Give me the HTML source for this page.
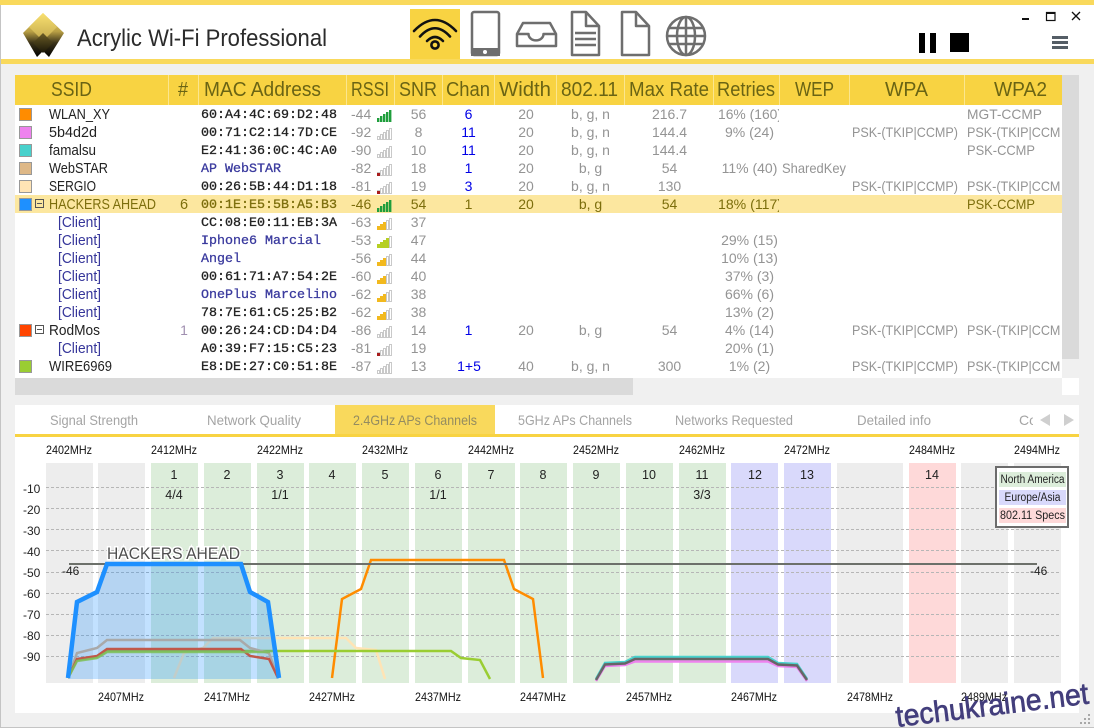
<!DOCTYPE html>
<html lang="en">
<head>
<meta charset="utf-8">
<title>Acrylic Wi-Fi Professional</title>
<style>
html,body{margin:0;padding:0;background:#f0f0f0;width:1094px;height:728px;overflow:hidden}
svg{display:block}
text{font-family:"Liberation Sans",Arial,sans-serif}
.h{font-size:20px;fill:#6a6414}
.s{font-size:14.5px;fill:#222}
.c{font-size:14.5px;fill:#35359a}
.m{font-family:"Liberation Mono","Courier New",monospace;font-size:13.33px;fill:#222;stroke:#222;stroke-width:.3}
.n{font-family:"Liberation Mono","Courier New",monospace;font-size:13.33px;fill:#3a3a9e;stroke:#3a3a9e;stroke-width:.3}
.g{font-size:14px;fill:#949494}
.b{font-size:14px;fill:#0000e6;text-anchor:middle}
.mid{text-anchor:middle}
.o{font-size:14px;fill:#7c6e0c}
.t{font-size:14px;fill:#a4a4a4}
.f{font-size:12px;fill:#111}
.l{font-size:12.5px;fill:#222;text-anchor:middle}
.y{font-size:12px;fill:#222}
.lg{font-size:11.5px;fill:#222;text-anchor:middle}
</style>
</head>
<body>
<svg xmlns="http://www.w3.org/2000/svg" width="1094" height="728" viewBox="0 0 1094 728">
<defs>
<linearGradient id="lg0" x1="0" y1="0" x2="0" y2="1"><stop offset="0" stop-color="#f7dc6c"/><stop offset=".42" stop-color="#b9a045"/><stop offset=".68" stop-color="#3a3218"/><stop offset="1" stop-color="#000"/></linearGradient>
<linearGradient id="lg1" x1="0" y1="0" x2="0" y2="1"><stop offset="0" stop-color="#f9e070"/><stop offset="1" stop-color="#c2a84c"/></linearGradient>
<linearGradient id="lg3" x1="0" y1="0" x2="0" y2="1"><stop offset="0" stop-color="#6b5c26"/><stop offset="1" stop-color="#1a1608"/></linearGradient>
<clipPath id="cr"><rect x="715" y="105" width="64" height="273"/></clipPath>
<clipPath id="cw"><rect x="965" y="105" width="96" height="273"/></clipPath>
<clipPath id="ct"><rect x="1000" y="405" width="33" height="29"/></clipPath>
<g id="h" fill="#fff" stroke="#c9c9c9" stroke-width="1">
<rect x=".5" y="8.5" width="2" height="3"/><rect x="3.5" y="6.5" width="2" height="5"/><rect x="6.5" y="4.5" width="2" height="7"/><rect x="9.5" y="2.5" width="2" height="9"/><rect x="12.5" y=".5" width="2" height="11"/>
</g>
<g id="s1"><use href="#h"/><rect x="0" y="9" width="3" height="3" fill="#a81c1c"/></g>
<g id="s3"><use href="#h"/><g fill="#f2b91e"><rect x="0" y="8" width="3" height="4"/><rect x="3" y="6" width="3" height="6"/><rect x="6" y="4" width="3" height="8"/></g></g>
<g id="s4"><use href="#h"/><g fill="#b6cf22"><rect x="0" y="8" width="3" height="4"/><rect x="3" y="6" width="3" height="6"/><rect x="6" y="4" width="3" height="8"/><rect x="9" y="2" width="3" height="10"/></g></g>
<g id="s5" fill="#1f9e3c"><rect x="0" y="8" width="2.4" height="4"/><rect x="3" y="6" width="2.4" height="6"/><rect x="6" y="4" width="2.4" height="8"/><rect x="9" y="2" width="2.4" height="10"/><rect x="12" y="0" width="2.4" height="12"/></g>
</defs>

<!-- window -->
<rect width="1094" height="728" fill="#f0f0f0"/>
<rect x="0" y="0" width="1" height="728" fill="#c4c4c4"/>
<rect x="0" y="727" width="1094" height="1" fill="#c4c4c4"/>
<rect x="0" y="0" width="1094" height="5" fill="#f9d95c"/>
<rect x="1" y="5" width="1093" height="54" fill="#fff"/>
<rect x="1" y="59" width="1093" height="5" fill="#f9d95c"/>

<!-- logo -->
<path d="M43 13L64 33L49 57L43 51L37 57L23 33Z" fill="url(#lg0)"/>
<polygon points="43,13 57,27 43,41 29,27" fill="url(#lg1)"/>
<polygon points="43,33 53,43 43,53 33,43" fill="url(#lg3)"/>
<text x="77" y="46" font-size="24" fill="#2b2b2b" textLength="250" lengthAdjust="spacingAndGlyphs">Acrylic Wi-Fi Professional</text>

<!-- toolbar -->
<rect x="410" y="9" width="50" height="50" fill="#f8d342"/>
<g fill="none" stroke="#111" stroke-width="2.6" stroke-linecap="round">
<path d="M414 31Q435 9 456 31"/><path d="M420 36.5Q435 20 450 36.5"/><path d="M427 41Q435 33 443 41"/><circle cx="435" cy="45" r="3.6"/>
</g>
<g fill="none" stroke="#6e6e6e" stroke-width="2.5" stroke-linejoin="round">
<rect x="472" y="12" width="27" height="43" rx="2"/>
<path d="M517 34L523 23H550L556 34V46H517Z"/>
<path d="M517 34H528.5A7 6 0 0 0 543.5 34H556"/>
<path d="M572 12H586L599 26V55H572Z"/><path d="M586 12V26H599"/>
<path d="M575 33H596M575 39H596M575 45H596"/>
<path d="M622 12H636L649 26V55H622Z"/><path d="M636 12V26H649"/>
<circle cx="686" cy="36" r="19"/><ellipse cx="686" cy="36" rx="9" ry="19"/><path d="M686 17V55M668 28H704M667 36H705M668 44H704"/>
</g>
<rect x="471" y="48" width="29" height="8" fill="#6e6e6e"/><circle cx="485" cy="52" r="2" fill="#fff"/>

<!-- window controls -->
<rect x="1022" y="18" width="7" height="2" fill="#111"/>
<rect x="1046.500" y="12.500" width="8.500" height="8" fill="none" stroke="#111" stroke-width="1.200"/><rect x="1046" y="12" width="9" height="2" fill="#111"/>
<path d="M1072 12L1080 20M1080 12L1072 20" stroke="#111" stroke-width="1.300" fill="none"/>
<rect x="919" y="33" width="6" height="20" fill="#000"/><rect x="930" y="33" width="6" height="20" fill="#000"/>
<rect x="950" y="33" width="19" height="19" fill="#000"/>
<g fill="#555e66"><rect x="1052" y="36" width="16" height="3"/><rect x="1052" y="41" width="16" height="3"/><rect x="1052" y="46" width="16" height="3"/></g>

<!-- table -->
<rect x="15" y="105" width="1047" height="273" fill="#fff"/>
<rect x="15" y="75" width="1047" height="30" fill="#f8d342"/>
<g fill="#fbe68f">
<rect x="168" y="75" width="1" height="30"/><rect x="198" y="75" width="1" height="30"/><rect x="346" y="75" width="1" height="30"/><rect x="394" y="75" width="1" height="30"/><rect x="442" y="75" width="1" height="30"/><rect x="494" y="75" width="1" height="30"/><rect x="556" y="75" width="1" height="30"/><rect x="624" y="75" width="1" height="30"/><rect x="713" y="75" width="1" height="30"/><rect x="779" y="75" width="1" height="30"/><rect x="849" y="75" width="1" height="30"/><rect x="964" y="75" width="1" height="30"/>
</g>
<text class="h" x="51" y="96" textLength="41" lengthAdjust="spacingAndGlyphs">SSID</text>
<text class="h" x="178" y="96" textLength="10" lengthAdjust="spacingAndGlyphs">#</text>
<text class="h" x="204" y="96" textLength="117" lengthAdjust="spacingAndGlyphs">MAC Address</text>
<text class="h" x="351" y="96" textLength="38" lengthAdjust="spacingAndGlyphs">RSSI</text>
<text class="h" x="399" y="96" textLength="38" lengthAdjust="spacingAndGlyphs">SNR</text>
<text class="h" x="446" y="96" textLength="44" lengthAdjust="spacingAndGlyphs">Chan</text>
<text class="h" x="499" y="96" textLength="52" lengthAdjust="spacingAndGlyphs">Width</text>
<text class="h" x="561" y="96" textLength="57" lengthAdjust="spacingAndGlyphs">802.11</text>
<text class="h" x="629" y="96" textLength="80" lengthAdjust="spacingAndGlyphs">Max Rate</text>
<text class="h" x="717" y="96" textLength="58" lengthAdjust="spacingAndGlyphs">Retries</text>
<text class="h" x="795" y="96" textLength="39" lengthAdjust="spacingAndGlyphs">WEP</text>
<text class="h" x="885" y="96" textLength="43" lengthAdjust="spacingAndGlyphs">WPA</text>
<text class="h" x="994" y="96" textLength="53" lengthAdjust="spacingAndGlyphs">WPA2</text>

<rect x="15" y="195" width="1047" height="18" fill="#fce79f"/>

<!-- swatches -->
<g stroke="#989898" stroke-width="1">
<rect x="19.500" y="108.500" width="12" height="12" fill="#ff8c00"/>
<rect x="19.500" y="126.500" width="12" height="12" fill="#ee82ee"/>
<rect x="19.500" y="144.500" width="12" height="12" fill="#48d1cc"/>
<rect x="19.500" y="162.500" width="12" height="12" fill="#deb887"/>
<rect x="19.500" y="180.500" width="12" height="12" fill="#ffe4b5"/>
<rect x="19.500" y="198.500" width="12" height="12" fill="#1e90ff"/>
<rect x="19.500" y="324.500" width="12" height="12" fill="#ff4500"/>
<rect x="19.500" y="360.500" width="12" height="12" fill="#9acd32"/>
</g>
<g fill="none" stroke="#555" stroke-width="1">
<rect x="35.500" y="199.500" width="8" height="8"/><path d="M37 203.500H42"/>
<rect x="35.500" y="325.500" width="8" height="8"/><path d="M37 329.500H42"/>
</g>

<!-- SSID -->
<text class="s" x="49" y="119" textLength="61" lengthAdjust="spacingAndGlyphs">WLAN_XY</text>
<text class="s" x="49" y="137" textLength="48" lengthAdjust="spacingAndGlyphs">5b4d2d</text>
<text class="s" x="49" y="155" textLength="47" lengthAdjust="spacingAndGlyphs">famalsu</text>
<text class="s" x="49" y="173" textLength="59" lengthAdjust="spacingAndGlyphs">WebSTAR</text>
<text class="s" x="49" y="191" textLength="47" lengthAdjust="spacingAndGlyphs">SERGIO</text>
<text class="s" x="49" y="209" textLength="107" lengthAdjust="spacingAndGlyphs" style="fill:#7c6e0c">HACKERS AHEAD</text>
<text class="c" x="58" y="227" textLength="43" lengthAdjust="spacingAndGlyphs">[Client]</text>
<text class="c" x="58" y="245" textLength="43" lengthAdjust="spacingAndGlyphs">[Client]</text>
<text class="c" x="58" y="263" textLength="43" lengthAdjust="spacingAndGlyphs">[Client]</text>
<text class="c" x="58" y="281" textLength="43" lengthAdjust="spacingAndGlyphs">[Client]</text>
<text class="c" x="58" y="299" textLength="43" lengthAdjust="spacingAndGlyphs">[Client]</text>
<text class="c" x="58" y="317" textLength="43" lengthAdjust="spacingAndGlyphs">[Client]</text>
<text class="s" x="49" y="335" textLength="51" lengthAdjust="spacingAndGlyphs">RodMos</text>
<text class="c" x="58" y="353" textLength="43" lengthAdjust="spacingAndGlyphs">[Client]</text>
<text class="s" x="49" y="371" textLength="63" lengthAdjust="spacingAndGlyphs">WIRE6969</text>
<text class="o mid" x="184" y="209" style="font-size:14.500px">6</text>
<text class="mid" x="184" y="335" font-size="14" fill="#a08fb0">1</text>

<!-- MAC -->
<text class="m" x="201" y="118">60:A4:4C:69:D2:48</text>
<text class="m" x="201" y="136">00:71:C2:14:7D:CE</text>
<text class="m" x="201" y="154">E2:41:36:0C:4C:A0</text>
<text class="n" x="201" y="172">AP WebSTAR</text>
<text class="m" x="201" y="190">00:26:5B:44:D1:18</text>
<text class="m" x="201" y="208" style="fill:#7c6e0c;stroke:#7c6e0c">00:1E:E5:5B:A5:B3</text>
<text class="m" x="201" y="226">CC:08:E0:11:EB:3A</text>
<text class="n" x="201" y="244">Iphone6 Marcial</text>
<text class="n" x="201" y="262">Angel</text>
<text class="m" x="201" y="280">00:61:71:A7:54:2E</text>
<text class="n" x="201" y="298">OnePlus Marcelino</text>
<text class="m" x="201" y="316">78:7E:61:C5:25:B2</text>
<text class="m" x="201" y="334">00:26:24:CD:D4:D4</text>
<text class="m" x="201" y="352">A0:39:F7:15:C5:23</text>
<text class="m" x="201" y="370">E8:DE:27:C0:51:8E</text>

<!-- RSSI -->
<g class="g">
<text class="g" x="351" y="119">-44</text><text class="g" x="351" y="137">-92</text><text class="g" x="351" y="155">-90</text><text class="g" x="351" y="173">-82</text><text class="g" x="351" y="191">-81</text>
<text class="o" x="351" y="209">-46</text>
<text class="g" x="351" y="227">-63</text><text class="g" x="351" y="245">-53</text><text class="g" x="351" y="263">-56</text><text class="g" x="351" y="281">-60</text><text class="g" x="351" y="299">-62</text><text class="g" x="351" y="317">-62</text><text class="g" x="351" y="335">-86</text><text class="g" x="351" y="353">-81</text><text class="g" x="351" y="371">-87</text>
</g>
<use href="#s5" x="377" y="110"/>
<use href="#h" x="377" y="128"/>
<use href="#h" x="377" y="146"/>
<use href="#s1" x="377" y="164"/>
<use href="#s1" x="377" y="182"/>
<use href="#s5" x="377" y="200"/>
<use href="#s3" x="377" y="218"/>
<use href="#s4" x="377" y="236"/>
<use href="#s3" x="377" y="254"/>
<use href="#s3" x="377" y="272"/>
<use href="#s3" x="377" y="290"/>
<use href="#s3" x="377" y="308"/>
<use href="#h" x="377" y="326"/>
<use href="#s1" x="377" y="344"/>
<use href="#h" x="377" y="362"/>

<!-- SNR -->
<g text-anchor="middle">
<text class="g" x="418.500" y="119">56</text><text class="g" x="418.500" y="137">8</text><text class="g" x="418.500" y="155">10</text><text class="g" x="418.500" y="173">18</text><text class="g" x="418.500" y="191">19</text><text class="o" x="418.500" y="209">54</text><text class="g" x="418.500" y="227">37</text><text class="g" x="418.500" y="245">47</text><text class="g" x="418.500" y="263">44</text><text class="g" x="418.500" y="281">40</text><text class="g" x="418.500" y="299">38</text><text class="g" x="418.500" y="317">38</text><text class="g" x="418.500" y="335">14</text><text class="g" x="418.500" y="353">19</text><text class="g" x="418.500" y="371">13</text>
</g>
<!-- Chan -->
<text class="b" x="468.500" y="119">6</text><text class="b" x="468.500" y="137">11</text><text class="b" x="468.500" y="155">11</text><text class="b" x="468.500" y="173">1</text><text class="b" x="468.500" y="191">3</text><text class="o mid" x="468.500" y="209">1</text><text class="b" x="468.500" y="335">1</text><text class="b" x="469" y="371">1+5</text>
<!-- Width -->
<g text-anchor="middle">
<text class="g" x="526" y="119">20</text><text class="g" x="526" y="137">20</text><text class="g" x="526" y="155">20</text><text class="g" x="526" y="173">20</text><text class="g" x="526" y="191">20</text><text class="o" x="526" y="209">20</text><text class="g" x="526" y="335">20</text><text class="g" x="526" y="371">40</text>
<!-- 802.11 -->
<text class="g" x="590.500" y="119">b, g, n</text><text class="g" x="590.500" y="137">b, g, n</text><text class="g" x="590.500" y="155">b, g, n</text><text class="g" x="590.500" y="173">b, g</text><text class="g" x="590.500" y="191">b, g, n</text><text class="o" x="590.500" y="209">b, g</text><text class="g" x="590.500" y="335">b, g</text><text class="g" x="590.500" y="371">b, g, n</text>
<!-- Max rate -->
<text class="g" x="669.500" y="119">216.7</text><text class="g" x="669.500" y="137">144.4</text><text class="g" x="669.500" y="155">144.4</text><text class="g" x="669.500" y="173">54</text><text class="g" x="669.500" y="191">130</text><text class="o" x="669.500" y="209">54</text><text class="g" x="669.500" y="335">54</text><text class="g" x="669.500" y="371">300</text>
</g>
<!-- Retries -->
<g clip-path="url(#cr)">
<text class="g" x="718" y="119" textLength="64" lengthAdjust="spacingAndGlyphs">16% (160)</text>
<text class="o" x="718" y="209" textLength="64" lengthAdjust="spacingAndGlyphs">18% (117)</text>
<g text-anchor="middle">
<text class="g" x="749.500" y="137">9% (24)</text><text class="g" x="749.500" y="173">11% (40)</text><text class="g" x="749.500" y="245">29% (15)</text><text class="g" x="749.500" y="263">10% (13)</text><text class="g" x="749.500" y="281">37% (3)</text><text class="g" x="749.500" y="299">66% (6)</text><text class="g" x="749.500" y="317">13% (2)</text><text class="g" x="749.500" y="335">4% (14)</text><text class="g" x="749.500" y="353">20% (1)</text><text class="g" x="749.500" y="371">1% (2)</text>
</g>
</g>
<text class="g" x="782" y="173" textLength="64" lengthAdjust="spacingAndGlyphs">SharedKey</text>
<!-- WPA -->
<text class="g" x="852" y="137" textLength="106" lengthAdjust="spacingAndGlyphs">PSK-(TKIP|CCMP)</text>
<text class="g" x="852" y="191" textLength="106" lengthAdjust="spacingAndGlyphs">PSK-(TKIP|CCMP)</text>
<text class="g" x="852" y="335" textLength="106" lengthAdjust="spacingAndGlyphs">PSK-(TKIP|CCMP)</text>
<text class="g" x="852" y="371" textLength="106" lengthAdjust="spacingAndGlyphs">PSK-(TKIP|CCMP)</text>
<!-- WPA2 -->
<g clip-path="url(#cw)">
<text class="g" x="967" y="119" textLength="75" lengthAdjust="spacingAndGlyphs">MGT-CCMP</text>
<text class="g" x="967" y="137" textLength="106" lengthAdjust="spacingAndGlyphs">PSK-(TKIP|CCMP)</text>
<text class="g" x="967" y="155" textLength="68" lengthAdjust="spacingAndGlyphs">PSK-CCMP</text>
<text class="g" x="967" y="191" textLength="106" lengthAdjust="spacingAndGlyphs">PSK-(TKIP|CCMP)</text>
<text class="o" x="967" y="209" textLength="68" lengthAdjust="spacingAndGlyphs">PSK-CCMP</text>
<text class="g" x="967" y="335" textLength="106" lengthAdjust="spacingAndGlyphs">PSK-(TKIP|CCMP)</text>
<text class="g" x="967" y="371" textLength="106" lengthAdjust="spacingAndGlyphs">PSK-(TKIP|CCMP)</text>
</g>

<!-- scrollbars -->
<rect x="1062" y="75" width="17" height="284" fill="#dadada"/>
<rect x="1062" y="359" width="17" height="19" fill="#f0f0f0"/>
<rect x="15" y="378" width="618" height="17" fill="#dadada"/>
<rect x="633" y="378" width="429" height="17" fill="#f0f0f0"/>
<rect x="1062" y="378" width="17" height="17" fill="#fff"/>

<!-- bottom panel -->
<rect x="15" y="405" width="1064" height="308" fill="#fff"/>
<rect x="335" y="405" width="160" height="29" fill="#f9d95c"/>
<rect x="15" y="434" width="1064" height="3" fill="#f8d342"/>
<text class="t" x="50" y="425" textLength="88" lengthAdjust="spacingAndGlyphs">Signal Strength</text>
<text class="t" x="207" y="425" textLength="94" lengthAdjust="spacingAndGlyphs">Network Quality</text>
<text class="t" x="353" y="425" textLength="124" lengthAdjust="spacingAndGlyphs" style="fill:#948c60">2.4GHz APs Channels</text>
<text class="t" x="518" y="425" textLength="114" lengthAdjust="spacingAndGlyphs">5GHz APs Channels</text>
<text class="t" x="675" y="425" textLength="118" lengthAdjust="spacingAndGlyphs">Networks Requested</text>
<text class="t" x="857" y="425" textLength="74" lengthAdjust="spacingAndGlyphs">Detailed info</text>
<g clip-path="url(#ct)"><text class="t" x="1019" y="425">Co</text></g>
<polygon points="1050,414 1050,426 1040,420" fill="#cfcfcf"/>
<polygon points="1064,414 1064,426 1074,420" fill="#cfcfcf"/>

<!-- freq labels -->
<g class="f">
<text class="f" x="46" y="454" textLength="46" lengthAdjust="spacingAndGlyphs">2402MHz</text>
<text class="f" x="151" y="454" textLength="46" lengthAdjust="spacingAndGlyphs">2412MHz</text>
<text class="f" x="257" y="454" textLength="46" lengthAdjust="spacingAndGlyphs">2422MHz</text>
<text class="f" x="362" y="454" textLength="46" lengthAdjust="spacingAndGlyphs">2432MHz</text>
<text class="f" x="468" y="454" textLength="46" lengthAdjust="spacingAndGlyphs">2442MHz</text>
<text class="f" x="573" y="454" textLength="46" lengthAdjust="spacingAndGlyphs">2452MHz</text>
<text class="f" x="679" y="454" textLength="46" lengthAdjust="spacingAndGlyphs">2462MHz</text>
<text class="f" x="784" y="454" textLength="46" lengthAdjust="spacingAndGlyphs">2472MHz</text>
<text class="f" x="909" y="454" textLength="46" lengthAdjust="spacingAndGlyphs">2484MHz</text>
<text class="f" x="1014" y="454" textLength="46" lengthAdjust="spacingAndGlyphs">2494MHz</text>
<text class="f" x="98" y="701" textLength="46" lengthAdjust="spacingAndGlyphs">2407MHz</text>
<text class="f" x="204" y="701" textLength="46" lengthAdjust="spacingAndGlyphs">2417MHz</text>
<text class="f" x="309" y="701" textLength="46" lengthAdjust="spacingAndGlyphs">2427MHz</text>
<text class="f" x="415" y="701" textLength="46" lengthAdjust="spacingAndGlyphs">2437MHz</text>
<text class="f" x="520" y="701" textLength="46" lengthAdjust="spacingAndGlyphs">2447MHz</text>
<text class="f" x="626" y="701" textLength="46" lengthAdjust="spacingAndGlyphs">2457MHz</text>
<text class="f" x="731" y="701" textLength="46" lengthAdjust="spacingAndGlyphs">2467MHz</text>
<text class="f" x="847" y="701" textLength="46" lengthAdjust="spacingAndGlyphs">2478MHz</text>
<text class="f" x="961" y="701" textLength="46" lengthAdjust="spacingAndGlyphs">2489MHz</text>
</g>

<!-- channel bands -->
<g fill="#ededed"><rect x="46" y="463" width="47" height="220"/><rect x="98" y="463" width="47" height="220"/><rect x="837" y="463" width="66" height="220"/><rect x="961" y="463" width="47" height="220"/><rect x="1014" y="463" width="47" height="220"/></g>
<g fill="#dcedda"><rect x="151" y="463" width="47" height="220"/><rect x="204" y="463" width="47" height="220"/><rect x="257" y="463" width="47" height="220"/><rect x="309" y="463" width="47" height="220"/><rect x="362" y="463" width="47" height="220"/><rect x="415" y="463" width="47" height="220"/><rect x="468" y="463" width="47" height="220"/><rect x="520" y="463" width="47" height="220"/><rect x="573" y="463" width="47" height="220"/><rect x="626" y="463" width="47" height="220"/><rect x="679" y="463" width="47" height="220"/></g>
<g fill="#d9d9fb"><rect x="731" y="463" width="47" height="220"/><rect x="784" y="463" width="47" height="220"/></g>
<rect x="909" y="463" width="47" height="220" fill="#fed9d9"/>

<!-- grid -->
<g stroke="#b6b6b6" stroke-width="1" stroke-dasharray="3 2" fill="none">
<path d="M46 487.500H1061M46 508.500H1061M46 529.500H1061M46 550.500H1061M46 572.500H1061M46 593.500H1061M46 614.500H1061M46 635.500H1061M46 656.500H1061"/>
</g>

<!-- channel labels -->
<text class="l" x="174" y="479">1</text><text class="l" x="227" y="479">2</text><text class="l" x="280" y="479">3</text><text class="l" x="332" y="479">4</text><text class="l" x="385" y="479">5</text><text class="l" x="438" y="479">6</text><text class="l" x="491" y="479">7</text><text class="l" x="543" y="479">8</text><text class="l" x="596" y="479">9</text><text class="l" x="649" y="479">10</text><text class="l" x="702" y="479">11</text><text class="l" x="755" y="479">12</text><text class="l" x="807" y="479">13</text><text class="l" x="932" y="479">14</text>
<text class="l" x="174" y="499">4/4</text><text class="l" x="280" y="499">1/1</text><text class="l" x="438" y="499">1/1</text><text class="l" x="702" y="499">3/3</text>

<!-- y axis -->
<text class="y" x="23" y="493">-10</text><text class="y" x="23" y="514">-20</text><text class="y" x="23" y="535">-30</text><text class="y" x="23" y="556">-40</text><text class="y" x="23" y="577">-50</text><text class="y" x="23" y="598">-60</text><text class="y" x="23" y="619">-70</text><text class="y" x="23" y="640">-80</text><text class="y" x="23" y="661">-90</text>

<!-- curves -->
<g fill="none" stroke-linejoin="miter">
<path d="M174 678L184 653L203 648L213 638H346L356 648L376 650L385 679" stroke="#ffe4b5" stroke-width="2.500"/>
<path d="M596 679L605 663L625 662L635 657H768L778 663L797 664L807 679" stroke="#48d1cc" stroke-width="2.500"/>
<path d="M596 681L605 666L625 665L635 661.500H768L778 666L797 667L807 681" stroke="#ee82ee" stroke-width="2.500"/>
<path d="M596 680L605 664.500L625 663.500L635 659H768L778 664.500L797 665.500L807 680" stroke="#666" stroke-width="2.500"/>
<path d="M332 678L342 599L361 589L371 560H504L514 589L533 599L543 678" stroke="#ff8c00" stroke-width="2.500"/>
<path d="M68 678L77 660L97 657L107 651H451L461 658L480 660L490 679" stroke="#9acd32" stroke-width="2.500"/>
</g>
<path d="M69 564H1037" stroke="#6c706a" stroke-width="2"/>
<text class="y" x="62" y="575">-46</text><text class="y" x="1030" y="575">-46</text>
<path d="M68 679L77 602L97 592L107 564H241L250 592L268 602L279 679Z" fill="#1e90ff" fill-opacity=".27"/>
<g fill="none" stroke-width="2.500">
<path d="M68 678L77 653L97 648L107 640H240L250 648L269 653L278 678" stroke="#a9a9a9"/>
<path d="M68 678L77 659L97 656L107 649H241L250 656L269 659L278 678" stroke="#c0584a"/>
<path d="M68 678L77 661L97 658L107 652H270" stroke="#7fbf5a" stroke-opacity=".85"/>
</g>
<path d="M68 678L77 602L97 592L107 564H241L250 592L268 602L279 678" fill="none" stroke="#1e90ff" stroke-width="4.500"/>
<text x="107" y="559" font-size="16.500" fill="#4e4e4e" stroke="#fff" stroke-width="3" paint-order="stroke" textLength="133" lengthAdjust="spacingAndGlyphs">HACKERS AHEAD</text>

<!-- legend -->
<rect x="996" y="467" width="72" height="60" fill="#fff" stroke="#6c6c6c" stroke-width="2"/>
<rect x="999" y="472" width="67" height="15" fill="#dcedda"/>
<rect x="999" y="490" width="67" height="15" fill="#d9d9fb"/>
<rect x="999" y="508" width="67" height="15" fill="#fed9d9"/>
<text class="lg" x="1032.500" y="483" textLength="64" lengthAdjust="spacingAndGlyphs">North America</text>
<text class="lg" x="1032.500" y="501" textLength="56" lengthAdjust="spacingAndGlyphs">Europe/Asia</text>
<text class="lg" x="1032.500" y="519" textLength="65" lengthAdjust="spacingAndGlyphs">802.11 Specs</text>

<!-- grip -->
<g fill="#a8a8a8"><rect x="1088" y="714" width="2" height="2"/><rect x="1084" y="718" width="2" height="2"/><rect x="1088" y="718" width="2" height="2"/><rect x="1080" y="722" width="2" height="2"/><rect x="1084" y="722" width="2" height="2"/><rect x="1088" y="722" width="2" height="2"/></g>

<!-- watermark -->
<text transform="translate(897 727) rotate(-7)" font-size="30" fill="#433e7c" stroke="#433e7c" stroke-width=".7" textLength="194" lengthAdjust="spacingAndGlyphs">techukraine.net</text>
</svg>
</body>
</html>
